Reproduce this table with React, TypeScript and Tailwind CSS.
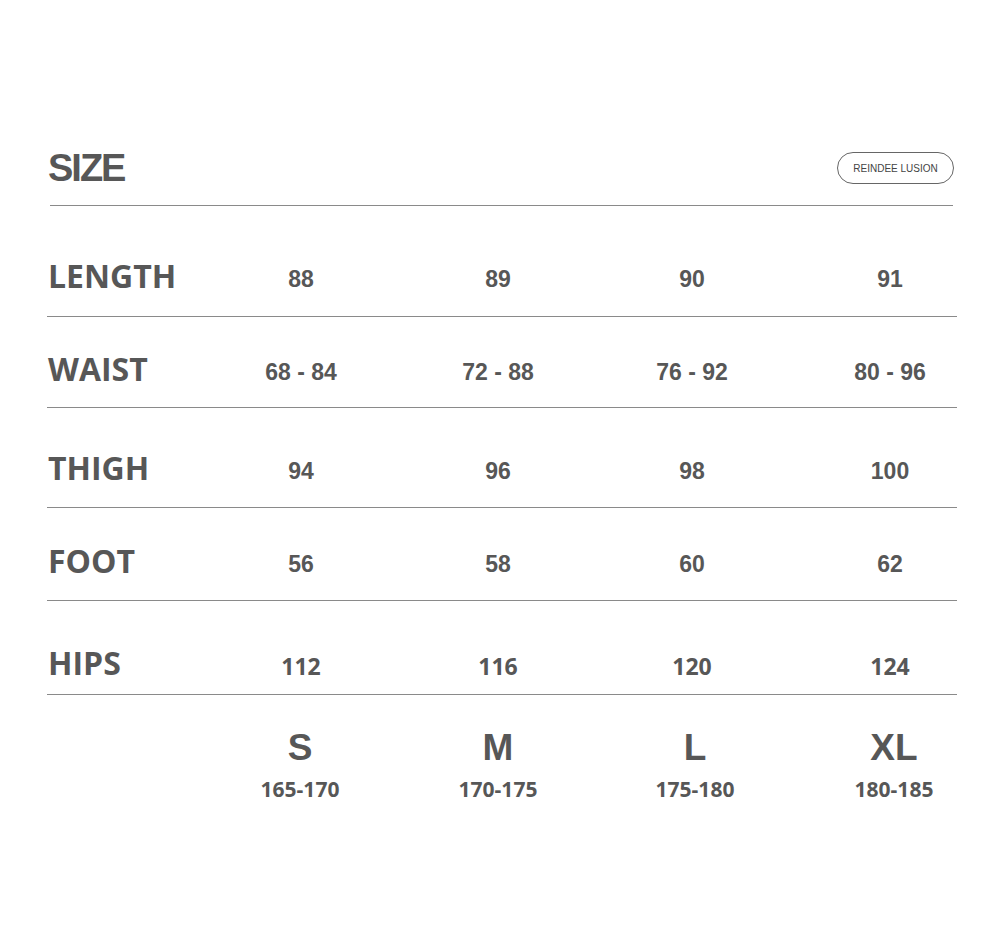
const columns = ['S', 'M', 'L', 'XL']

const rows = [
  { label: 'LENGTH', values: ['88', '89', '90', '91'], pad: 'pt-[50px] pb-[20px]', font: 'arial' },
  { label: 'WAIST', values: ['68 - 84', '72 - 88', '76 - 92', '80 - 96'], pad: 'pt-[32px] pb-[18px]', font: 'arial' },
  { label: 'THIGH', values: ['94', '96', '98', '100'], pad: 'pt-[40px] pb-[19px]', font: 'arial' },
  { label: 'FOOT', values: ['56', '58', '60', '62'], pad: 'pt-[33px] pb-[19px]', font: 'arial' },
  { label: 'HIPS', values: ['112', '116', '120', '124'], pad: 'pt-[42px] pb-[11px]', font: 'open' },
]

const heights = ['165-170', '170-175', '175-180', '180-185']

export default function App() {
  return (
    <div className="w-[1000px] h-[929px] bg-white text-[#575757] overflow-hidden">
      {/* Header */}
      <div className="pt-[147px] pl-[48px] pr-[46px]">
        <div className="flex items-center justify-between h-[42px]">
          <h1 className="font-['Liberation_Sans',Arial,sans-serif] font-bold text-[38px] leading-none tracking-[-2px]">
            SIZE
          </h1>
          <div className="h-[32px] w-[117px] rounded-full border border-[#666] flex items-center justify-center font-['Liberation_Sans',Arial,sans-serif] text-[10px] text-[#444]">
            REINDEE LUSION
          </div>
        </div>
        <div className="mt-[16px] ml-[2px] mr-[1px] border-b border-[#8a8a8a]" />
      </div>

      {/* Measurement rows */}
      <div className="ml-[47px] w-[910px]">
        {rows.map(row => (
          <div key={row.label} className={`border-b border-[#8a8a8a] ${row.pad}`}>
            <div className="grid grid-cols-[155px_198px_196px_192px_204px] h-[40px] items-center">
              <div className="pl-[1px] font-['Open_Sans',sans-serif] font-bold text-[32px] leading-[40px]">
                {row.label}
              </div>
              {row.values.map(v => (
                <div
                  key={v}
                  className={`mt-[6px] text-center font-bold text-[23px] leading-[34px] ${
                    row.font === 'open' ? "font-['Open_Sans',sans-serif]" : "font-['Liberation_Sans',Arial,sans-serif]"
                  }`}
                >
                  {v}
                </div>
              ))}
            </div>
          </div>
        ))}
      </div>

      {/* Size labels */}
      <div className="ml-[47px] grid grid-cols-[155px_196px_200px_194px_204px] pt-[33px]">
        <div />
        {columns.map((c, i) => (
          <div key={c} className="flex flex-col items-center">
            <div className="font-['Liberation_Sans',Arial,sans-serif] font-bold text-[37px] leading-[40px]">{c}</div>
            <div className="mt-[6px] font-['Open_Sans',sans-serif] font-bold text-[21px] leading-[30px]">
              {heights[i]}
            </div>
          </div>
        ))}
      </div>
    </div>
  )
}
